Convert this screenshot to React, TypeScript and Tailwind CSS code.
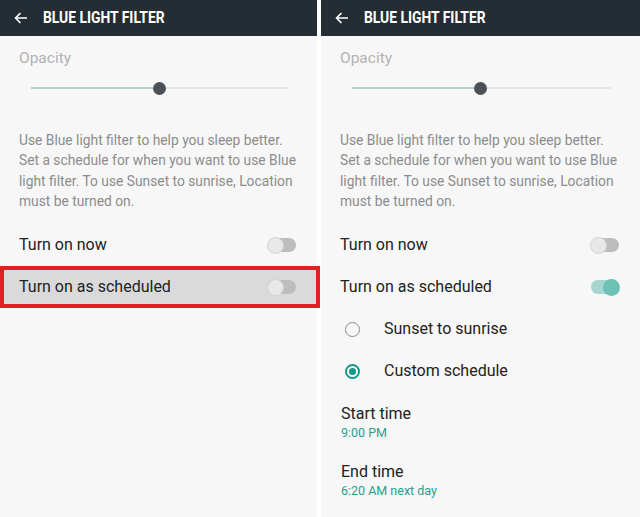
const font = { fontFamily: "Roboto, 'Noto Sans', sans-serif" };

function Header() {
  return (
    <div className="h-[36px] bg-[#252d34] flex items-center pl-[14px] shrink-0">
      <svg width="14" height="12" viewBox="0 0 14 12" fill="none" stroke="#ffffff" strokeWidth="1.6">
        <path d="M13 6H1.5M6.5 1L1.5 6l5 5" />
      </svg>
      <span className="ml-[15px] text-white font-bold text-[16.5px] leading-none inline-block origin-left scale-x-[0.84] whitespace-nowrap">
        BLUE LIGHT FILTER
      </span>
    </div>
  );
}

function Slider() {
  return (
    <div className="flex items-center h-[22px] pl-[31px] pr-[29px] mt-[9px]">
      <div className="h-[2px] w-[122px] bg-[#b3cfcc]" />
      <div className="w-[13px] h-[13px] rounded-full bg-[#4b5157] shrink-0" />
      <div className="h-[2px] flex-1 bg-[#e3e5e6]" />
    </div>
  );
}

function Toggle({ on }: { on?: boolean }) {
  return (
    <div className="relative w-[30px] h-[17px] flex items-center">
      <div className={`w-[28px] h-[14px] ml-[1px] rounded-full ${on ? "bg-[#a6d6cf]" : "bg-[#bdbdbd]"}`} />
      <div
        className={`absolute top-0 w-[17px] h-[17px] rounded-full ${
          on ? "right-0 bg-[#6cc1b4]" : "left-0 bg-[#e8e8e8] border border-[#d2d2d2]"
        }`}
      />
    </div>
  );
}

function Row({ label, on }: { label: string; on?: boolean }) {
  return (
    <div className="h-[42px] flex items-center justify-between pl-[19px] pr-[20px]">
      <span className="text-[16px] text-[#222222]">{label}</span>
      <Toggle on={on} />
    </div>
  );
}

function Radio({ label, checked }: { label: string; checked?: boolean }) {
  return (
    <div className="h-[42px] flex items-center pl-[24px]">
      <div
        className={`w-[15px] h-[15px] rounded-full flex items-center justify-center ${
          checked ? "border-2 border-[#17978a]" : "border border-[#8a8a8a]"
        }`}
      >
        {checked && <div className="w-[7px] h-[7px] rounded-full bg-[#17978a]" />}
      </div>
      <span className="ml-[24px] text-[16px] text-[#222222]">{label}</span>
    </div>
  );
}

function Intro() {
  return (
    <>
      <div className="pl-[19px] pt-[12px] text-[15.5px] leading-[20px] text-[#b2b2b2]">Opacity</div>
      <Slider />
      <p className="ml-[19px] w-[284px] mt-[31px] text-[13.8px] leading-[20.3px] text-[#8c8c8c]">
        Use Blue light filter to help you sleep better. Set a schedule for when you want to use Blue light
        filter. To use Sunset to sunrise, Location must be turned on.
      </p>
      <div className="h-[13px]" />
    </>
  );
}

function TimeItem({ title, value }: { title: string; value: string }) {
  return (
    <div className="h-[58px] pt-[12px] pl-[20px]">
      <div className="text-[16px] leading-[20px] text-[#222222]">{title}</div>
      <div className="text-[12.5px] leading-[18px] text-[#2a9d8f]">{value}</div>
    </div>
  );
}

export default function App() {
  return (
    <div className="w-[640px] h-[517px] bg-white flex overflow-hidden" style={font}>
      <div className="w-[317px] bg-[#f7f7f7] flex flex-col">
        <Header />
        <Intro />
        <Row label="Turn on now" />
        <div className="h-[42px] -mr-[3px] relative border-4 border-[#e41e26] bg-[#dadada] flex items-center justify-between pl-[15px] pr-[19px]">
          <span className="text-[16px] text-[#222222]">Turn on as scheduled</span>
          <Toggle />
        </div>
      </div>
      <div className="w-[4px]" />
      <div className="flex-1 bg-[#f7f7f7] flex flex-col">
        <Header />
        <Intro />
        <Row label="Turn on now" />
        <Row label="Turn on as scheduled" on />
        <Radio label="Sunset to sunrise" />
        <Radio label="Custom schedule" checked />
        <TimeItem title="Start time" value="9:00 PM" />
        <TimeItem title="End time" value="6:20 AM next day" />
      </div>
    </div>
  );
}
